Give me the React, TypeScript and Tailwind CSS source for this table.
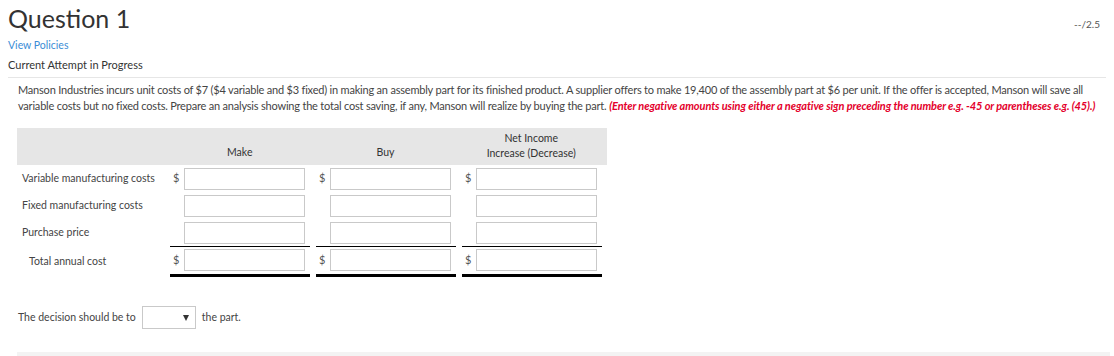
import { ChangeEvent, useState } from 'react';

type Row = {
  label: string;
  dollar: boolean;
};

const rows: Row[] = [
  { label: 'Variable manufacturing costs', dollar: true },
  { label: 'Fixed manufacturing costs', dollar: false },
  { label: 'Purchase price', dollar: false },
];

const columns = ['make', 'buy', 'net'] as const;

const AmountCell = ({ dollar, total }: { dollar: boolean; total?: boolean }) => {
  const [value, setValue] = useState('');

  return (
    <div className="w-[146px]">
      <div
        className={`w-[140px] flex items-center ${
          total ? 'border-b-[3px] border-black h-[30px] pb-[1px]' : 'h-[27px]'
        }`}
      >
        <span className="w-[14px] pl-[3px] text-[11px] text-[#555]">{dollar ? '$' : ''}</span>
        <input
          value={value}
          onChange={(e: ChangeEvent<HTMLInputElement>) => setValue(e.target.value)}
          className="w-[121px] h-[22px] border border-[#c9c9c9] bg-white outline-none px-1 text-[11px]"
        />
      </div>
    </div>
  );
};

export default function App() {
  const [decision, setDecision] = useState('');

  return (
    <div className="w-[1114px] h-[356px] overflow-hidden bg-white text-[#333] font-['Lato','Noto_Sans',sans-serif]">
      {/* title bar */}
      <div className="flex justify-between items-start px-2 pt-[3px]">
        <h1 className="text-[25px] leading-[30px] font-normal text-[#333]">Question 1</h1>
        <span className="text-[10px] text-[#555] mt-[14px] mr-[6px]">--/2.5</span>
      </div>
      <div className="px-2 mt-[5px] text-[10.5px] leading-[14px] text-[#3b8dd6]">View Policies</div>
      <div className="px-2 mt-[6px] text-[11px] leading-[14px] text-[#333]">Current Attempt in Progress</div>

      <div className="mx-2 mt-[5px] border-t border-[#e6e6e6]" />

      {/* problem statement */}
      <p className="pl-[18px] pr-3 mt-[4px] text-[11px] leading-[16px] tracking-[-0.2px] text-[#444]">
        Manson Industries incurs unit costs of $7 ($4 variable and $3 fixed) in making an assembly part for its finished
        product. A supplier offers to make 19,400 of the assembly part at $6 per unit. If the offer is accepted, Manson will
        save all variable costs but no fixed costs. Prepare an analysis showing the total cost saving, if any, Manson will
        realize by buying the part.{' '}
        <em className="font-bold text-[#e4002b] tracking-[-0.1px]">
          (Enter negative amounts using either a negative sign preceding the number e.g. -45 or parentheses e.g. (45).)
        </em>
      </p>

      {/* make or buy table */}
      <div className="ml-[17px] mt-[14px]">
        <div className="w-[590px] h-[37px] bg-[#e6e6e6] flex text-[10.5px] leading-[15px]">
          <div className="w-[153px]" />
          <div className="w-[146px]">
            <div className="w-[140px] h-full flex items-end justify-center pb-[5px]">Make</div>
          </div>
          <div className="w-[146px]">
            <div className="w-[140px] h-full flex items-end justify-center pb-[5px]">Buy</div>
          </div>
          <div className="w-[146px]">
            <div className="w-[140px] h-full flex flex-col items-center justify-end pb-[4px]">
              <span>Net Income</span>
              <span>Increase (Decrease)</span>
            </div>
          </div>
        </div>

        {rows.map((row) => (
          <div key={row.label} className="flex items-center h-[27px]">
            <div className="w-[153px] pl-[5px] text-[10.5px] text-[#444]">{row.label}</div>
            {columns.map((col) => (
              <AmountCell key={col} dollar={row.dollar} />
            ))}
          </div>
        ))}

        {/* total row */}
        <div className="flex items-start">
          <div className="w-[153px] pl-[12px] pt-[8px] text-[10.5px] text-[#444]">Total annual cost</div>
          {columns.map((col) => (
            <div key={col} className="w-[146px]">
              <div className="w-[140px] border-t border-black">
                <AmountCell dollar total />
              </div>
            </div>
          ))}
        </div>
      </div>

      {/* decision */}
      <div className="flex items-center pl-[18px] mt-[29px] text-[10.5px] text-[#444]">
        <span>The decision should be to</span>
        <div className="relative ml-[6px] w-[54px] h-[23px] border border-[#c9c9c9] bg-white">
          <select
            value={decision}
            onChange={(e) => setDecision(e.target.value)}
            className="w-full h-full appearance-none bg-transparent outline-none px-1 text-[10.5px]"
          >
            <option value=""></option>
            <option value="make">make</option>
            <option value="buy">buy</option>
          </select>
          <span className="pointer-events-none absolute right-[6px] top-[8px] w-0 h-0 border-l-[3.5px] border-r-[3.5px] border-t-[6px] border-l-transparent border-r-transparent border-t-[#333]" />
        </div>
        <span className="ml-[6px]">the part.</span>
      </div>

      <div className="ml-[17px] mr-[4px] mt-[23px] h-[6px] bg-[#f3f3f3]" />
    </div>
  );
}
